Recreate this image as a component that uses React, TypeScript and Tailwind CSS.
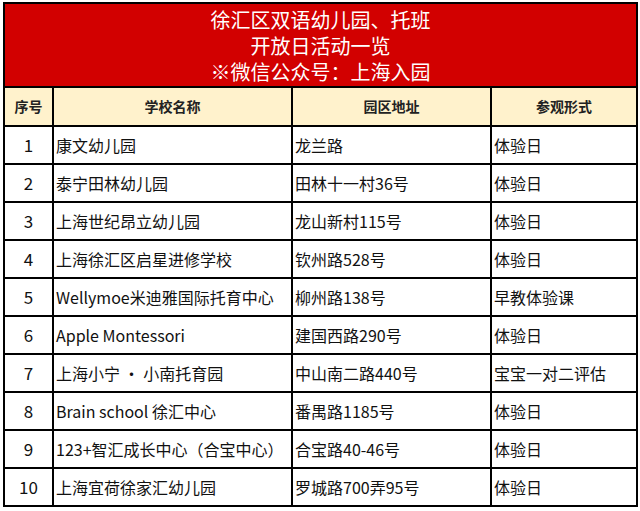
const rows: [string, string, string][] = [
  ["康文幼儿园", "龙兰路", "体验日"],
  ["泰宁田林幼儿园", "田林十一村36号", "体验日"],
  ["上海世纪昂立幼儿园", "龙山新村115号", "体验日"],
  ["上海徐汇区启星进修学校", "钦州路528号", "体验日"],
  ["Wellymoe米迪雅国际托育中心", "柳州路138号", "早教体验课"],
  ["Apple Montessori", "建国西路290号", "体验日"],
  ["上海小宁 · 小南托育园", "中山南二路440号", "宝宝一对二评估"],
  ["Brain school 徐汇中心", "番禺路1185号", "体验日"],
  ["123+智汇成长中心（合宝中心）", "合宝路40-46号", "体验日"],
  ["上海宜荷徐家汇幼儿园", "罗城路700弄95号", "体验日"],
];

const font = { fontFamily: '"Noto Sans CJK SC", "Noto Sans", sans-serif' };

export default function App() {
  return (
    <div className="h-[511px] w-[640px] bg-white pl-[3px] pt-[2px]" style={font}>
      <div className="grid w-[635px] grid-cols-[47px_237px_197px_144px] gap-[2px] bg-black p-[2px]">
        <div className="col-span-4 flex h-[82px] flex-col items-center justify-center bg-[#d20000] pt-[2px] text-[20px] leading-[26px] text-white">
          <div>徐汇区双语幼儿园、托班</div>
          <div>开放日活动一览</div>
          <div>※微信公众号：上海入园</div>
        </div>
        {["序号", "学校名称", "园区地址", "参观形式"].map((h) => (
          <div
            key={h}
            className="flex h-[37px] items-center justify-center bg-[#fff2cc] text-[14px] font-bold text-[#222]"
          >
            {h}
          </div>
        ))}
        {rows.map((r, i) => (
          <div key={i} className="contents">
            <div className="flex h-[36px] items-center justify-center bg-white text-[17px] text-[#111]">
              {i + 1}
            </div>
            {r.map((c, j) => (
              <div
                key={j}
                className="flex h-[36px] items-center whitespace-nowrap bg-white pl-[2px] text-[16px] text-[#111]"
              >
                {c}
              </div>
            ))}
          </div>
        ))}
      </div>
    </div>
  );
}
